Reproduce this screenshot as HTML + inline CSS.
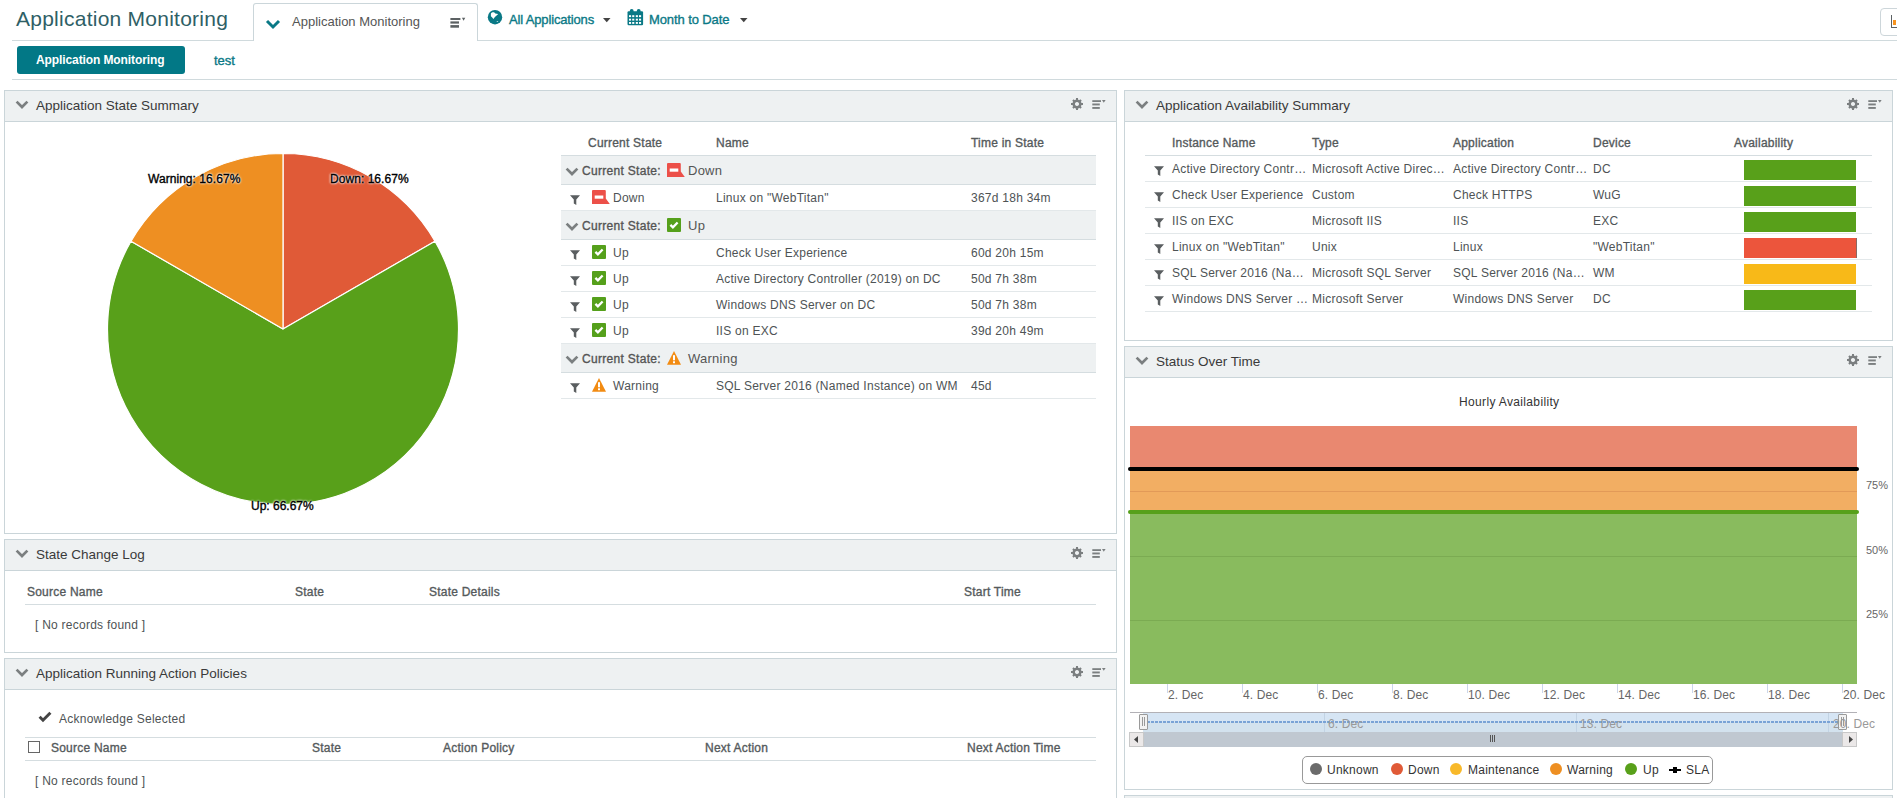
<!DOCTYPE html>
<html><head><meta charset="utf-8">
<style>
*{box-sizing:border-box;margin:0;padding:0}
html,body{width:1897px;height:798px;overflow:hidden;background:#fff;font-family:"Liberation Sans",sans-serif;color:#444;position:relative}
.a{position:absolute;white-space:nowrap;line-height:14px}
.panel{position:absolute;border:1px solid #cad5d9;background:#fff}
.ph{position:absolute;left:0;right:0;top:0;height:31px;background:#eef1f2;border-bottom:1px solid #cad5d9}
.ptitle{position:absolute;left:31px;top:8px;font-size:13.5px;color:#3a3a3a;white-space:nowrap;line-height:14px}
.pchev{position:absolute;left:10px;top:9px}
.pgear{position:absolute;right:33px;top:7px}
.pmenu{position:absolute;right:10px;top:9px}
</style></head><body>
<svg width="0" height="0" style="position:absolute">
<defs>
<symbol id="chev" viewBox="0 0 14 9"><polyline points="1.6,1.6 7,7 12.4,1.6" fill="none" stroke="#7b7f80" stroke-width="2.7"/></symbol>
<symbol id="chevt" viewBox="0 0 16 11"><polyline points="2,2 8,8 14,2" fill="none" stroke="#0a7986" stroke-width="3"/></symbol>
<symbol id="gear" viewBox="0 0 13 13"><g fill="#7b7f80"><path fill-rule="evenodd" d="M6.5,1.6a4.9,4.9 0 1,0 0.001,0zM6.5,4.3a2.2,2.2 0 1,1 -0.001,0z"/>
<rect x="5.4" y="0" width="2.2" height="3"/><rect x="5.4" y="10" width="2.2" height="3"/><rect x="0" y="5.4" width="3" height="2.2"/><rect x="10" y="5.4" width="3" height="2.2"/>
<rect x="5.4" y="0.3" width="2.2" height="3" transform="rotate(45 6.5 6.5)"/><rect x="5.4" y="9.7" width="2.2" height="3" transform="rotate(45 6.5 6.5)"/><rect x="0.3" y="5.4" width="3" height="2.2" transform="rotate(45 6.5 6.5)"/><rect x="9.7" y="5.4" width="3" height="2.2" transform="rotate(45 6.5 6.5)"/></g></symbol>
<symbol id="menu" viewBox="0 0 14 10"><g fill="#7b7f80"><rect x="0.3" y="0.2" width="8.7" height="1.8"/><rect x="0.3" y="3.5" width="7.5" height="1.9"/><rect x="0.3" y="7" width="7.5" height="1.9"/><path d="M10,0 h3.6 l-1.8,2.7z"/></g></symbol>
<symbol id="tmenu" viewBox="0 0 16 11"><g fill="#5c6163"><rect x="0.4" y="1" width="10" height="2"/><rect x="0.4" y="4.4" width="8.6" height="2.2"/><rect x="0.4" y="8.1" width="8.6" height="2.6"/><path d="M11.9,0.8 h3.4 l-1.7,2.9z"/></g></symbol>
<symbol id="filter" viewBox="0 0 10 10"><path d="M0,0.3 H10 L6.3,4.6 V10 L3.8,8.6 V4.6 Z" fill="#5a5e60"/></symbol>
<symbol id="down" viewBox="0 0 18 14"><path d="M0,1 Q0,0 1,0 H12.8 Q13.8,0 13.8,1 V8.6 L17.8,14 H0 Z" fill="#ec5049"/><rect x="2.7" y="5.5" width="8.6" height="3.2" fill="#fff"/></symbol>
<symbol id="up" viewBox="0 0 14 14"><rect width="14" height="14" rx="1" fill="#55a01b"/><polyline points="3.4,6.9 5.9,9.4 10.6,4.5" fill="none" stroke="#fff" stroke-width="2.3"/></symbol>
<symbol id="warn" viewBox="0 0 14 14"><path d="M7,0.1 L14,13.7 H0 Z" fill="#f28b12"/><rect x="6" y="4.2" width="2" height="5.1" fill="#fff"/><rect x="6" y="10.3" width="2" height="1.9" fill="#fff"/></symbol>
</defs></svg>

<div class="a" style="left:16px;top:7px;font-size:21px;color:#2f5f66;font-weight:400;letter-spacing:0.25px;line-height:24px">Application Monitoring</div>
<div class="a" style="left:253px;top:3px;width:225px;height:38px;border:1px solid #cbd6da;border-bottom:none;border-radius:3px 3px 0 0;background:#fff"></div>
<svg class="a" style="left:265px;top:19px;" width="16" height="11"><use href="#chevt"/></svg>
<div class="a" style="left:292px;top:15px;font-size:13px;color:#555;font-weight:400;letter-spacing:0px;">Application Monitoring</div>
<svg class="a" style="left:450px;top:17px;" width="16" height="11"><use href="#tmenu"/></svg>
<div class="a" style="left:12px;top:40px;width:241px;height:1px;background:#d0dadd"></div>
<div class="a" style="left:478px;top:40px;width:1419px;height:1px;background:#d0dadd"></div>
<div class="a" style="left:509px;top:13px;font-size:13px;color:#0a7986;-webkit-text-stroke:0.35px #0a7986;letter-spacing:-0.15px;">All Applications</div>
<div class="a" style="left:649px;top:13px;font-size:13px;color:#0a7986;-webkit-text-stroke:0.35px #0a7986;letter-spacing:-0.1px;">Month to Date</div>
<div class="a" style="left:17px;top:46px;width:168px;height:28px;background:#027886;border-radius:3px"></div>
<div class="a" style="left:36px;top:53px;font-size:12px;color:#fff;font-weight:700;letter-spacing:-0.1px;">Application Monitoring</div>
<div class="a" style="left:214px;top:54px;font-size:13px;color:#0a7986;-webkit-text-stroke:0.35px #0a7986;letter-spacing:0px;">test</div>
<div class="a" style="left:12px;top:79px;width:1885px;height:1px;background:#d0dadd"></div>
<div class="panel" style="left:4px;top:90px;width:1113px;height:444px"><div class="ph"></div><svg class="pchev" width="14" height="9"><use href="#chev"/></svg><div class="ptitle">Application State Summary</div><svg class="pgear" width="12" height="12"><use href="#gear"/></svg><svg class="pmenu" width="14" height="10"><use href="#menu"/></svg></div>
<div class="panel" style="left:4px;top:539px;width:1113px;height:114px"><div class="ph"></div><svg class="pchev" width="14" height="9"><use href="#chev"/></svg><div class="ptitle">State Change Log</div><svg class="pgear" width="12" height="12"><use href="#gear"/></svg><svg class="pmenu" width="14" height="10"><use href="#menu"/></svg></div>
<div class="panel" style="left:4px;top:658px;width:1113px;height:160px"><div class="ph"></div><svg class="pchev" width="14" height="9"><use href="#chev"/></svg><div class="ptitle">Application Running Action Policies</div><svg class="pgear" width="12" height="12"><use href="#gear"/></svg><svg class="pmenu" width="14" height="10"><use href="#menu"/></svg></div>
<div class="panel" style="left:1124px;top:90px;width:769px;height:251px"><div class="ph"></div><svg class="pchev" width="14" height="9"><use href="#chev"/></svg><div class="ptitle">Application Availability Summary</div><svg class="pgear" width="12" height="12"><use href="#gear"/></svg><svg class="pmenu" width="14" height="10"><use href="#menu"/></svg></div>
<div class="panel" style="left:1124px;top:346px;width:769px;height:444px"><div class="ph"></div><svg class="pchev" width="14" height="9"><use href="#chev"/></svg><div class="ptitle">Status Over Time</div><svg class="pgear" width="12" height="12"><use href="#gear"/></svg><svg class="pmenu" width="14" height="10"><use href="#menu"/></svg></div>
<div class="panel" style="left:1124px;top:795px;width:769px;height:40px"><div class="ph"></div></div>
<div class="a" style="left:588px;top:136px;font-size:12px;color:#555a5c;-webkit-text-stroke:0.35px #555a5c;letter-spacing:0.22px;">Current State</div>
<div class="a" style="left:716px;top:136px;font-size:12px;color:#555a5c;-webkit-text-stroke:0.35px #555a5c;letter-spacing:0.22px;">Name</div>
<div class="a" style="left:971px;top:136px;font-size:12px;color:#555a5c;-webkit-text-stroke:0.35px #555a5c;letter-spacing:0.22px;">Time in State</div>
<div class="a" style="left:561px;top:155px;width:535px;height:1px;background:#d5dde0"></div>
<div class="a" style="left:561px;top:156px;width:535px;height:28px;background:#eef1f2;"></div>
<svg class="a" style="left:565px;top:167px;" width="14" height="9"><use href="#chev"/></svg>
<div class="a" style="left:582px;top:164px;font-size:12px;color:#555;-webkit-text-stroke:0.35px #555;letter-spacing:0.3px;">Current State:</div>
<svg class="a" style="left:667px;top:163px;" width="18" height="14"><use href="#down"/></svg>
<div class="a" style="left:688px;top:164px;font-size:13px;color:#555;font-weight:400;letter-spacing:0.25px;">Down</div>
<div class="a" style="left:561px;top:184px;width:535px;height:1px;background:#d5dde0"></div>
<svg class="a" style="left:570px;top:195px;" width="10" height="10"><use href="#filter"/></svg>
<svg class="a" style="left:592px;top:190px;" width="18" height="14"><use href="#down"/></svg>
<div class="a" style="left:613px;top:191px;font-size:12px;color:#4e5355;font-weight:400;letter-spacing:0.25px;">Down</div>
<div class="a" style="left:716px;top:191px;font-size:12px;color:#4e5355;font-weight:400;letter-spacing:0.25px;">Linux on "WebTitan"</div>
<div class="a" style="left:971px;top:191px;font-size:12px;color:#4e5355;font-weight:400;letter-spacing:0.25px;">367d 18h 34m</div>
<div class="a" style="left:561px;top:210px;width:535px;height:1px;background:#e3e8ea"></div>
<div class="a" style="left:561px;top:211px;width:535px;height:28px;background:#eef1f2;"></div>
<svg class="a" style="left:565px;top:222px;" width="14" height="9"><use href="#chev"/></svg>
<div class="a" style="left:582px;top:219px;font-size:12px;color:#555;-webkit-text-stroke:0.35px #555;letter-spacing:0.3px;">Current State:</div>
<svg class="a" style="left:667px;top:218px;" width="14" height="14"><use href="#up"/></svg>
<div class="a" style="left:688px;top:219px;font-size:13px;color:#555;font-weight:400;letter-spacing:0.25px;">Up</div>
<div class="a" style="left:561px;top:239px;width:535px;height:1px;background:#d5dde0"></div>
<svg class="a" style="left:570px;top:250px;" width="10" height="10"><use href="#filter"/></svg>
<svg class="a" style="left:592px;top:245px;" width="14" height="14"><use href="#up"/></svg>
<div class="a" style="left:613px;top:246px;font-size:12px;color:#4e5355;font-weight:400;letter-spacing:0.25px;">Up</div>
<div class="a" style="left:716px;top:246px;font-size:12px;color:#4e5355;font-weight:400;letter-spacing:0.25px;">Check User Experience</div>
<div class="a" style="left:971px;top:246px;font-size:12px;color:#4e5355;font-weight:400;letter-spacing:0.25px;">60d 20h 15m</div>
<div class="a" style="left:561px;top:265px;width:535px;height:1px;background:#e3e8ea"></div>
<svg class="a" style="left:570px;top:276px;" width="10" height="10"><use href="#filter"/></svg>
<svg class="a" style="left:592px;top:271px;" width="14" height="14"><use href="#up"/></svg>
<div class="a" style="left:613px;top:272px;font-size:12px;color:#4e5355;font-weight:400;letter-spacing:0.25px;">Up</div>
<div class="a" style="left:716px;top:272px;font-size:12px;color:#4e5355;font-weight:400;letter-spacing:0.25px;">Active Directory Controller (2019) on DC</div>
<div class="a" style="left:971px;top:272px;font-size:12px;color:#4e5355;font-weight:400;letter-spacing:0.25px;">50d 7h 38m</div>
<div class="a" style="left:561px;top:291px;width:535px;height:1px;background:#e3e8ea"></div>
<svg class="a" style="left:570px;top:302px;" width="10" height="10"><use href="#filter"/></svg>
<svg class="a" style="left:592px;top:297px;" width="14" height="14"><use href="#up"/></svg>
<div class="a" style="left:613px;top:298px;font-size:12px;color:#4e5355;font-weight:400;letter-spacing:0.25px;">Up</div>
<div class="a" style="left:716px;top:298px;font-size:12px;color:#4e5355;font-weight:400;letter-spacing:0.25px;">Windows DNS Server on DC</div>
<div class="a" style="left:971px;top:298px;font-size:12px;color:#4e5355;font-weight:400;letter-spacing:0.25px;">50d 7h 38m</div>
<div class="a" style="left:561px;top:317px;width:535px;height:1px;background:#e3e8ea"></div>
<svg class="a" style="left:570px;top:328px;" width="10" height="10"><use href="#filter"/></svg>
<svg class="a" style="left:592px;top:323px;" width="14" height="14"><use href="#up"/></svg>
<div class="a" style="left:613px;top:324px;font-size:12px;color:#4e5355;font-weight:400;letter-spacing:0.25px;">Up</div>
<div class="a" style="left:716px;top:324px;font-size:12px;color:#4e5355;font-weight:400;letter-spacing:0.25px;">IIS on EXC</div>
<div class="a" style="left:971px;top:324px;font-size:12px;color:#4e5355;font-weight:400;letter-spacing:0.25px;">39d 20h 49m</div>
<div class="a" style="left:561px;top:343px;width:535px;height:1px;background:#e3e8ea"></div>
<div class="a" style="left:561px;top:344px;width:535px;height:28px;background:#eef1f2;"></div>
<svg class="a" style="left:565px;top:355px;" width="14" height="9"><use href="#chev"/></svg>
<div class="a" style="left:582px;top:352px;font-size:12px;color:#555;-webkit-text-stroke:0.35px #555;letter-spacing:0.3px;">Current State:</div>
<svg class="a" style="left:667px;top:351px;" width="14" height="14"><use href="#warn"/></svg>
<div class="a" style="left:688px;top:352px;font-size:13px;color:#555;font-weight:400;letter-spacing:0.25px;">Warning</div>
<div class="a" style="left:561px;top:372px;width:535px;height:1px;background:#d5dde0"></div>
<svg class="a" style="left:570px;top:383px;" width="10" height="10"><use href="#filter"/></svg>
<svg class="a" style="left:592px;top:378px;" width="14" height="14"><use href="#warn"/></svg>
<div class="a" style="left:613px;top:379px;font-size:12px;color:#4e5355;font-weight:400;letter-spacing:0.25px;">Warning</div>
<div class="a" style="left:716px;top:379px;font-size:12px;color:#4e5355;font-weight:400;letter-spacing:0.25px;">SQL Server 2016 (Named Instance) on WM</div>
<div class="a" style="left:971px;top:379px;font-size:12px;color:#4e5355;font-weight:400;letter-spacing:0.25px;">45d</div>
<div class="a" style="left:561px;top:398px;width:535px;height:1px;background:#e3e8ea"></div>
<svg class="a" style="left:0;top:0" width="600" height="540"><path d="M283,329 L283.00,153.50 A175.5,175.5 0 0 1 434.99,241.25 Z" fill="#e05a37" stroke="#fff" stroke-width="1.2" stroke-linejoin="round"/><path d="M283,329 L434.99,241.25 A175.5,175.5 0 1 1 131.01,241.25 Z" fill="#58a01a" stroke="#fff" stroke-width="1.2" stroke-linejoin="round"/><path d="M283,329 L131.01,241.25 A175.5,175.5 0 0 1 283.00,153.50 Z" fill="#ee8f22" stroke="#fff" stroke-width="1.2" stroke-linejoin="round"/></svg>
<div class="a" style="left:148px;top:172px;font-size:12px;color:#000;-webkit-text-stroke:0.35px #000;letter-spacing:0.05px;text-shadow:0 0 2px #fff,0 0 2px #fff,0 0 3px #fff">Warning: 16.67%</div>
<div class="a" style="left:330px;top:172px;font-size:12px;color:#000;-webkit-text-stroke:0.35px #000;letter-spacing:0.05px;text-shadow:0 0 2px #fff,0 0 2px #fff,0 0 3px #fff">Down: 16.67%</div>
<div class="a" style="left:251px;top:499px;font-size:12px;color:#000;-webkit-text-stroke:0.35px #000;letter-spacing:0px;text-shadow:0 0 2px #fff,0 0 2px #fff,0 0 3px #fff">Up: 66.67%</div>
<svg class="a" style="left:487px;top:10px" width="16" height="15" viewBox="0 0 16 15"><circle cx="8" cy="7.2" r="7.2" fill="#0a7986"/><path d="M3.9,3.4 C4.6,2.3 6.4,2 7.4,2.5 L8.3,3.5 L9.6,3.7 L11.2,4.1 L9.6,5.4 L7.9,6.9 L6.4,8.9 L5.2,7.5 L3.9,6.2 Z" fill="#fff"/><path d="M9.2,11.5 L11.4,11 L10.6,12.1Z" fill="#fff"/></svg>
<svg class="a" style="left:603px;top:18px" width="8" height="5" viewBox="0 0 8 5"><path d="M0,0H7.5L3.75,4.3Z" fill="#444"/></svg>
<svg class="a" style="left:627px;top:8px" width="17" height="18" viewBox="0 0 17 18"><g fill="#0a7986"><rect x="0.5" y="3.2" width="15.6" height="14" rx="1.2"/><rect x="2.8" y="0.9" width="3.8" height="4.5" rx="1.8"/><rect x="9.8" y="0.9" width="3.8" height="4.5" rx="1.8"/></g><g fill="#fff"><rect x="2" y="7.2" width="2.1" height="1.9"/><rect x="2" y="10.7" width="2.1" height="1.9"/><rect x="2" y="14" width="2.1" height="1.9"/><rect x="5.2" y="7.2" width="2.1" height="1.9"/><rect x="5.2" y="10.7" width="2.1" height="1.9"/><rect x="5.2" y="14" width="2.1" height="1.9"/><rect x="8.8" y="7.2" width="2.1" height="1.9"/><rect x="8.8" y="10.7" width="2.1" height="1.9"/><rect x="8.8" y="14" width="2.1" height="1.9"/><rect x="12" y="7.2" width="2.1" height="1.9"/><rect x="12" y="10.7" width="2.1" height="1.9"/><rect x="12" y="14" width="2.1" height="1.9"/></g></svg>
<svg class="a" style="left:740px;top:18px" width="8" height="5" viewBox="0 0 8 5"><path d="M0,0H7.5L3.75,4.3Z" fill="#444"/></svg>
<div class="a" style="left:1880px;top:8px;width:30px;height:28px;border:1px solid #cdd6da;border-radius:4px;background:#fff"></div>
<div class="a" style="left:1891px;top:15px;width:1px;height:13px;background:#5c6163;"></div>
<div class="a" style="left:1891px;top:27px;width:6px;height:1px;background:#5c6163;"></div>
<div class="a" style="left:1893px;top:20px;width:3px;height:5px;background:#f7931e;"></div>
<div class="a" style="left:1172px;top:136px;font-size:12px;color:#555a5c;-webkit-text-stroke:0.35px #555a5c;letter-spacing:0.22px;">Instance Name</div>
<div class="a" style="left:1312px;top:136px;font-size:12px;color:#555a5c;-webkit-text-stroke:0.35px #555a5c;letter-spacing:0.22px;">Type</div>
<div class="a" style="left:1453px;top:136px;font-size:12px;color:#555a5c;-webkit-text-stroke:0.35px #555a5c;letter-spacing:0.22px;">Application</div>
<div class="a" style="left:1593px;top:136px;font-size:12px;color:#555a5c;-webkit-text-stroke:0.35px #555a5c;letter-spacing:0.22px;">Device</div>
<div class="a" style="left:1734px;top:136px;font-size:12px;color:#555a5c;-webkit-text-stroke:0.35px #555a5c;letter-spacing:0.22px;">Availability</div>
<div class="a" style="left:1145px;top:155px;width:727px;height:1px;background:#d5dde0"></div>
<svg class="a" style="left:1154px;top:166px;" width="10" height="10"><use href="#filter"/></svg>
<div class="a" style="left:1172px;top:162px;font-size:12px;color:#4e5355;font-weight:400;letter-spacing:0.25px;">Active Directory Contr…</div>
<div class="a" style="left:1312px;top:162px;font-size:12px;color:#4e5355;font-weight:400;letter-spacing:0.25px;">Microsoft Active Direc…</div>
<div class="a" style="left:1453px;top:162px;font-size:12px;color:#4e5355;font-weight:400;letter-spacing:0.25px;">Active Directory Contr…</div>
<div class="a" style="left:1593px;top:162px;font-size:12px;color:#4e5355;font-weight:400;letter-spacing:0.25px;">DC</div>
<div class="a" style="left:1744px;top:160px;width:112px;height:20px;background:#58a01a;"></div>
<div class="a" style="left:1145px;top:181px;width:727px;height:1px;background:#e3e8ea"></div>
<svg class="a" style="left:1154px;top:192px;" width="10" height="10"><use href="#filter"/></svg>
<div class="a" style="left:1172px;top:188px;font-size:12px;color:#4e5355;font-weight:400;letter-spacing:0.25px;">Check User Experience</div>
<div class="a" style="left:1312px;top:188px;font-size:12px;color:#4e5355;font-weight:400;letter-spacing:0.25px;">Custom</div>
<div class="a" style="left:1453px;top:188px;font-size:12px;color:#4e5355;font-weight:400;letter-spacing:0.25px;">Check HTTPS</div>
<div class="a" style="left:1593px;top:188px;font-size:12px;color:#4e5355;font-weight:400;letter-spacing:0.25px;">WuG</div>
<div class="a" style="left:1744px;top:186px;width:112px;height:20px;background:#58a01a;"></div>
<div class="a" style="left:1145px;top:207px;width:727px;height:1px;background:#e3e8ea"></div>
<svg class="a" style="left:1154px;top:218px;" width="10" height="10"><use href="#filter"/></svg>
<div class="a" style="left:1172px;top:214px;font-size:12px;color:#4e5355;font-weight:400;letter-spacing:0.25px;">IIS on EXC</div>
<div class="a" style="left:1312px;top:214px;font-size:12px;color:#4e5355;font-weight:400;letter-spacing:0.25px;">Microsoft IIS</div>
<div class="a" style="left:1453px;top:214px;font-size:12px;color:#4e5355;font-weight:400;letter-spacing:0.25px;">IIS</div>
<div class="a" style="left:1593px;top:214px;font-size:12px;color:#4e5355;font-weight:400;letter-spacing:0.25px;">EXC</div>
<div class="a" style="left:1744px;top:212px;width:112px;height:20px;background:#58a01a;"></div>
<div class="a" style="left:1145px;top:233px;width:727px;height:1px;background:#e3e8ea"></div>
<svg class="a" style="left:1154px;top:244px;" width="10" height="10"><use href="#filter"/></svg>
<div class="a" style="left:1172px;top:240px;font-size:12px;color:#4e5355;font-weight:400;letter-spacing:0.25px;">Linux on "WebTitan"</div>
<div class="a" style="left:1312px;top:240px;font-size:12px;color:#4e5355;font-weight:400;letter-spacing:0.25px;">Unix</div>
<div class="a" style="left:1453px;top:240px;font-size:12px;color:#4e5355;font-weight:400;letter-spacing:0.25px;">Linux</div>
<div class="a" style="left:1593px;top:240px;font-size:12px;color:#4e5355;font-weight:400;letter-spacing:0.25px;">"WebTitan"</div>
<div class="a" style="left:1744px;top:238px;width:112px;height:20px;background:#ec553c;"></div>
<div class="a" style="left:1856px;top:238px;width:1px;height:20px;background:#8a6a64;"></div>
<div class="a" style="left:1145px;top:259px;width:727px;height:1px;background:#e3e8ea"></div>
<svg class="a" style="left:1154px;top:270px;" width="10" height="10"><use href="#filter"/></svg>
<div class="a" style="left:1172px;top:266px;font-size:12px;color:#4e5355;font-weight:400;letter-spacing:0.25px;">SQL Server 2016 (Na…</div>
<div class="a" style="left:1312px;top:266px;font-size:12px;color:#4e5355;font-weight:400;letter-spacing:0.25px;">Microsoft SQL Server</div>
<div class="a" style="left:1453px;top:266px;font-size:12px;color:#4e5355;font-weight:400;letter-spacing:0.25px;">SQL Server 2016 (Na…</div>
<div class="a" style="left:1593px;top:266px;font-size:12px;color:#4e5355;font-weight:400;letter-spacing:0.25px;">WM</div>
<div class="a" style="left:1744px;top:264px;width:112px;height:20px;background:#f8b918;"></div>
<div class="a" style="left:1145px;top:285px;width:727px;height:1px;background:#e3e8ea"></div>
<svg class="a" style="left:1154px;top:296px;" width="10" height="10"><use href="#filter"/></svg>
<div class="a" style="left:1172px;top:292px;font-size:12px;color:#4e5355;font-weight:400;letter-spacing:0.25px;">Windows DNS Server …</div>
<div class="a" style="left:1312px;top:292px;font-size:12px;color:#4e5355;font-weight:400;letter-spacing:0.25px;">Microsoft Server</div>
<div class="a" style="left:1453px;top:292px;font-size:12px;color:#4e5355;font-weight:400;letter-spacing:0.25px;">Windows DNS Server</div>
<div class="a" style="left:1593px;top:292px;font-size:12px;color:#4e5355;font-weight:400;letter-spacing:0.25px;">DC</div>
<div class="a" style="left:1744px;top:290px;width:112px;height:20px;background:#58a01a;"></div>
<div class="a" style="left:1145px;top:311px;width:727px;height:1px;background:#e3e8ea"></div>
<div class="a" style="left:1459px;top:395px;font-size:12px;color:#333;font-weight:400;letter-spacing:0.35px;">Hourly Availability</div>
<div class="a" style="left:1130px;top:426px;width:727px;height:258px;background:#89bb5e;"></div>
<div class="a" style="left:1130px;top:426px;width:727px;height:86px;background:#f2ae63;"></div>
<div class="a" style="left:1130px;top:426px;width:727px;height:43px;background:#e98870;"></div>
<div class="a" style="left:1130px;top:491px;width:727px;height:1px;background:#e29a58"></div>
<div class="a" style="left:1130px;top:556px;width:727px;height:1px;background:#7bab52"></div>
<div class="a" style="left:1130px;top:620px;width:727px;height:1px;background:#7bab52"></div>
<div class="a" style="left:1128px;top:467px;width:731px;height:4px;background:#000;border-radius:2px"></div>
<div class="a" style="left:1128px;top:510px;width:731px;height:4px;background:#56a01a;border-radius:2px"></div>
<div class="a" style="left:1866px;top:478px;font-size:11px;color:#666;font-weight:400;letter-spacing:0px;">75%</div>
<div class="a" style="left:1866px;top:543px;font-size:11px;color:#666;font-weight:400;letter-spacing:0px;">50%</div>
<div class="a" style="left:1866px;top:607px;font-size:11px;color:#666;font-weight:400;letter-spacing:0px;">25%</div>
<div class="a" style="left:1167px;top:684px;width:1px;height:9px;background:#ccd6eb;"></div>
<div class="a" style="left:1168px;top:688px;font-size:12px;color:#666;font-weight:400;letter-spacing:0.1px;">2. Dec</div>
<div class="a" style="left:1242px;top:684px;width:1px;height:9px;background:#ccd6eb;"></div>
<div class="a" style="left:1243px;top:688px;font-size:12px;color:#666;font-weight:400;letter-spacing:0.1px;">4. Dec</div>
<div class="a" style="left:1317px;top:684px;width:1px;height:9px;background:#ccd6eb;"></div>
<div class="a" style="left:1318px;top:688px;font-size:12px;color:#666;font-weight:400;letter-spacing:0.1px;">6. Dec</div>
<div class="a" style="left:1392px;top:684px;width:1px;height:9px;background:#ccd6eb;"></div>
<div class="a" style="left:1393px;top:688px;font-size:12px;color:#666;font-weight:400;letter-spacing:0.1px;">8. Dec</div>
<div class="a" style="left:1467px;top:684px;width:1px;height:9px;background:#ccd6eb;"></div>
<div class="a" style="left:1468px;top:688px;font-size:12px;color:#666;font-weight:400;letter-spacing:0.1px;">10. Dec</div>
<div class="a" style="left:1542px;top:684px;width:1px;height:9px;background:#ccd6eb;"></div>
<div class="a" style="left:1543px;top:688px;font-size:12px;color:#666;font-weight:400;letter-spacing:0.1px;">12. Dec</div>
<div class="a" style="left:1617px;top:684px;width:1px;height:9px;background:#ccd6eb;"></div>
<div class="a" style="left:1618px;top:688px;font-size:12px;color:#666;font-weight:400;letter-spacing:0.1px;">14. Dec</div>
<div class="a" style="left:1692px;top:684px;width:1px;height:9px;background:#ccd6eb;"></div>
<div class="a" style="left:1693px;top:688px;font-size:12px;color:#666;font-weight:400;letter-spacing:0.1px;">16. Dec</div>
<div class="a" style="left:1767px;top:684px;width:1px;height:9px;background:#ccd6eb;"></div>
<div class="a" style="left:1768px;top:688px;font-size:12px;color:#666;font-weight:400;letter-spacing:0.1px;">18. Dec</div>
<div class="a" style="left:1842px;top:684px;width:1px;height:9px;background:#ccd6eb;"></div>
<div class="a" style="left:1843px;top:688px;font-size:12px;color:#666;font-weight:400;letter-spacing:0.1px;">20. Dec</div>
<div class="a" style="left:1130px;top:712px;width:727px;height:1px;background:#b2b1b6;"></div>
<div class="a" style="left:1143px;top:713px;width:700px;height:19px;background:#d6e5f4;"></div>
<div class="a" style="left:1143px;top:722px;width:700px;height:10px;background:#d3e2ee;"></div>
<div class="a" style="left:1324px;top:713px;width:1px;height:19px;background:#c2d3e4;"></div>
<div class="a" style="left:1576px;top:713px;width:1px;height:19px;background:#c2d3e4;"></div>
<div class="a" style="left:1828px;top:713px;width:1px;height:19px;background:#c2d3e4;"></div>
<div class="a" style="left:1147px;top:721px;width:691px;height:2px;background:repeating-linear-gradient(90deg,#7aa3d6 0 3px,transparent 3px 4px);"></div>
<div class="a" style="left:1139px;top:714px;width:9px;height:16px;background:#f2f2f2;border:1px solid #9a9a9a;border-radius:1px"></div>
<div class="a" style="left:1142px;top:717px;width:1px;height:9px;background:#999;"></div>
<div class="a" style="left:1144px;top:717px;width:1px;height:9px;background:#999;"></div>
<div class="a" style="left:1838px;top:714px;width:9px;height:16px;background:#f2f2f2;border:1px solid #9a9a9a;border-radius:1px"></div>
<div class="a" style="left:1841px;top:717px;width:1px;height:9px;background:#999;"></div>
<div class="a" style="left:1843px;top:717px;width:1px;height:9px;background:#999;"></div>
<div class="a" style="left:1328px;top:717px;font-size:12px;color:#999;font-weight:400;letter-spacing:0.1px;">6. Dec</div>
<div class="a" style="left:1580px;top:717px;font-size:12px;color:#999;font-weight:400;letter-spacing:0.1px;">13. Dec</div>
<div class="a" style="left:1833px;top:717px;font-size:12px;color:#999;font-weight:400;letter-spacing:0.1px;">20. Dec</div>
<div class="a" style="left:1143px;top:732px;width:700px;height:15px;background:#c0c8d1;"></div>
<div class="a" style="left:1129px;top:732px;width:15px;height:15px;background:#ebe8e8;border:1px solid #c8c8c8"></div>
<div class="a" style="left:1842px;top:732px;width:15px;height:15px;background:#ebe8e8;border:1px solid #c8c8c8"></div>
<svg class="a" style="left:1134px;top:736px" width="5" height="7"><path d="M4,0V7L0,3.5Z" fill="#444"/></svg>
<svg class="a" style="left:1849px;top:736px" width="5" height="7"><path d="M0,0V7L4,3.5Z" fill="#444"/></svg>
<div class="a" style="left:1490px;top:735px;width:1px;height:7px;background:#555;"></div>
<div class="a" style="left:1492px;top:735px;width:1px;height:7px;background:#555;"></div>
<div class="a" style="left:1494px;top:735px;width:1px;height:7px;background:#555;"></div>
<div class="a" style="left:1302px;top:756px;width:411px;height:28px;border:1px solid #999;border-radius:5px;background:#fff"></div>
<div class="a" style="left:1310px;top:763px;width:12px;height:12px;border-radius:50%;background:#6b6b6b"></div>
<div class="a" style="left:1327px;top:763px;font-size:12px;color:#333;font-weight:400;letter-spacing:0.25px;">Unknown</div>
<div class="a" style="left:1391px;top:763px;width:12px;height:12px;border-radius:50%;background:#e05a37"></div>
<div class="a" style="left:1408px;top:763px;font-size:12px;color:#333;font-weight:400;letter-spacing:0.25px;">Down</div>
<div class="a" style="left:1450px;top:763px;width:12px;height:12px;border-radius:50%;background:#f8b92a"></div>
<div class="a" style="left:1468px;top:763px;font-size:12px;color:#333;font-weight:400;letter-spacing:0.25px;">Maintenance</div>
<div class="a" style="left:1550px;top:763px;width:12px;height:12px;border-radius:50%;background:#ee8f22"></div>
<div class="a" style="left:1567px;top:763px;font-size:12px;color:#333;font-weight:400;letter-spacing:0.25px;">Warning</div>
<div class="a" style="left:1625px;top:763px;width:12px;height:12px;border-radius:50%;background:#58a01a"></div>
<div class="a" style="left:1643px;top:763px;font-size:12px;color:#333;font-weight:400;letter-spacing:0.25px;">Up</div>
<div class="a" style="left:1669px;top:769px;width:12px;height:2px;background:#000;"></div>
<div class="a" style="left:1673px;top:767px;width:4px;height:6px;background:#000;"></div>
<div class="a" style="left:1686px;top:763px;font-size:12px;color:#333;font-weight:400;letter-spacing:0.25px;">SLA</div>
<div class="a" style="left:27px;top:585px;font-size:12px;color:#555a5c;-webkit-text-stroke:0.35px #555a5c;letter-spacing:0.22px;">Source Name</div>
<div class="a" style="left:295px;top:585px;font-size:12px;color:#555a5c;-webkit-text-stroke:0.35px #555a5c;letter-spacing:0.22px;">State</div>
<div class="a" style="left:429px;top:585px;font-size:12px;color:#555a5c;-webkit-text-stroke:0.35px #555a5c;letter-spacing:0.22px;">State Details</div>
<div class="a" style="left:964px;top:585px;font-size:12px;color:#555a5c;-webkit-text-stroke:0.35px #555a5c;letter-spacing:0.22px;">Start Time</div>
<div class="a" style="left:25px;top:604px;width:1071px;height:1px;background:#d5dde0"></div>
<div class="a" style="left:35px;top:618px;font-size:12px;color:#4e5355;font-weight:400;letter-spacing:0.25px;">[ No records found ]</div>
<svg class="a" style="left:38px;top:711px" width="14" height="12" viewBox="0 0 14 12"><polyline points="1.6,5.8 5,9.2 12.4,1.8" fill="none" stroke="#444" stroke-width="3"/></svg>
<div class="a" style="left:59px;top:712px;font-size:12px;color:#4e5355;font-weight:400;letter-spacing:0.25px;">Acknowledge Selected</div>
<div class="a" style="left:25px;top:737px;width:1071px;height:1px;background:#d5dde0"></div>
<div class="a" style="left:28px;top:741px;width:12px;height:12px;background:#fff;border:1px solid #666"></div>
<div class="a" style="left:51px;top:741px;font-size:12px;color:#555a5c;-webkit-text-stroke:0.35px #555a5c;letter-spacing:0.22px;">Source Name</div>
<div class="a" style="left:312px;top:741px;font-size:12px;color:#555a5c;-webkit-text-stroke:0.35px #555a5c;letter-spacing:0.22px;">State</div>
<div class="a" style="left:443px;top:741px;font-size:12px;color:#555a5c;-webkit-text-stroke:0.35px #555a5c;letter-spacing:0.22px;">Action Policy</div>
<div class="a" style="left:705px;top:741px;font-size:12px;color:#555a5c;-webkit-text-stroke:0.35px #555a5c;letter-spacing:0.22px;">Next Action</div>
<div class="a" style="left:967px;top:741px;font-size:12px;color:#555a5c;-webkit-text-stroke:0.35px #555a5c;letter-spacing:0.22px;">Next Action Time</div>
<div class="a" style="left:25px;top:760px;width:1071px;height:1px;background:#d5dde0"></div>
<div class="a" style="left:35px;top:774px;font-size:12px;color:#4e5355;font-weight:400;letter-spacing:0.25px;">[ No records found ]</div>
</body></html>
